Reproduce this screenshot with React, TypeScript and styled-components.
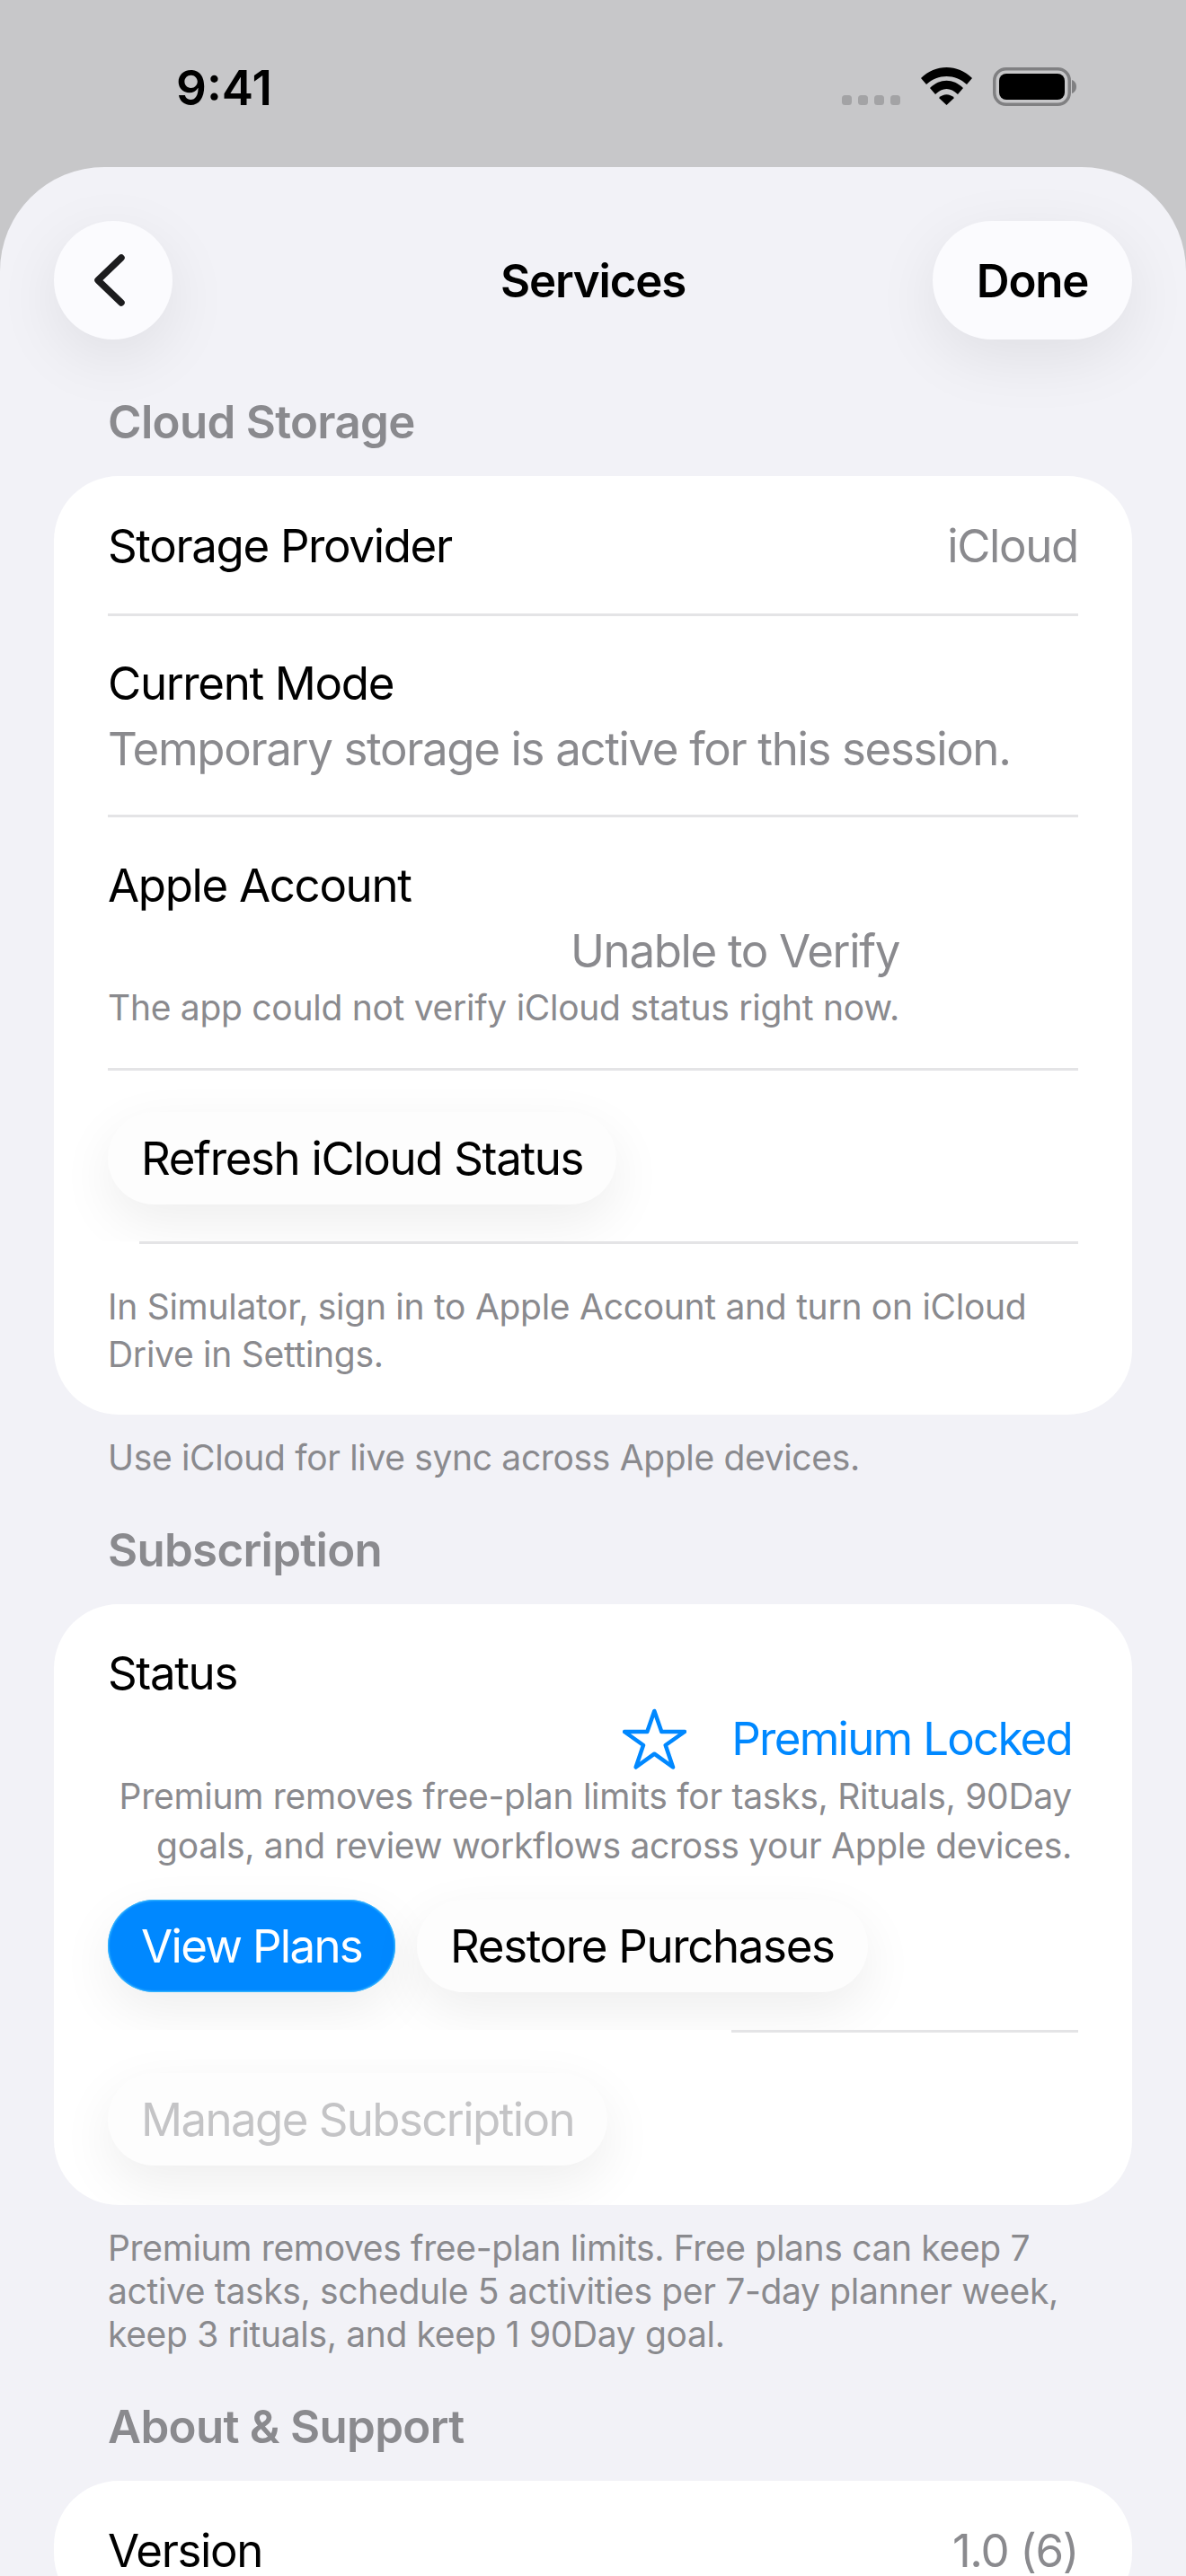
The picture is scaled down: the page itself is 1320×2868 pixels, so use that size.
import styled, { createGlobalStyle } from "styled-components";

const GlobalStyle = createGlobalStyle`
  html, body {
    margin: 0;
    padding: 0;
    background: #c7c7c9;
  }
  body {
    font-family: Inter, "Liberation Sans", sans-serif;
    -webkit-font-smoothing: antialiased;
  }
`;

const Screen = styled.div`
  width: 1320px;
  height: 2868px;
  overflow: hidden;
  background: #c7c7c9;
`;

const StatusBar = styled.div`
  height: 186px;
  box-sizing: border-box;
  padding: 68px 122px 0 196px;
  display: flex;
  justify-content: space-between;
  align-items: flex-start;
`;

const Clock = styled.div`
  font-size: 53px;
  line-height: 60px;
  font-weight: 600;
  color: #000;
`;

const StatusIcons = styled.div`
  display: flex;
  align-items: flex-start;
  gap: 23px;
  margin-top: 7px;
`;

const Dots = styled.svg`
  margin-top: 31px;
`;

const Sheet = styled.div`
  background: #f2f2f7;
  border-radius: 116px 116px 0 0;
  padding: 60px 60px 0;
  height: 2682px;
  box-sizing: border-box;
`;

const NavBar = styled.div`
  display: grid;
  grid-template-columns: 1fr auto 1fr;
  align-items: center;
  height: 132px;
`;

const GlassButton = styled.div`
  height: 132px;
  width: 132px;
  box-sizing: border-box;
  border-radius: 66px;
  background: #fbfbfe;
  box-shadow: 0 20px 70px rgba(0, 0, 0, 0.08);
  display: flex;
  align-items: center;
  justify-content: center;
`;

const DoneButton = styled(GlassButton)`
  width: 222px;
  justify-self: end;
  font-size: 51px;
  font-weight: 600;
  letter-spacing: -1.2px;
  color: #000;
`;

const BackIcon = styled.svg`
  margin-right: 8px;
`;

const Title = styled.div`
  font-size: 51px;
  font-weight: 600;
  letter-spacing: -1.2px;
  color: #000;
`;

const SectionTitle = styled.div<{ $top: number }>`
  margin-top: ${(p) => p.$top}px;
  padding-left: 60px;
  font-size: 51px;
  line-height: 62px;
  font-weight: 600;
  letter-spacing: -0.7px;
  color: #8a8a8e;
`;

const Card = styled.div`
  margin-top: 29px;
  background: #fff;
  border-radius: 72px;
  overflow: hidden;
`;

const Row = styled.div<{ $pad?: string }>`
  margin: 0 60px;
  padding: ${(p) => p.$pad ?? "0"};
`;

const Divider = styled.div<{ $left?: number }>`
  height: 3px;
  margin-left: ${(p) => p.$left ?? 60}px;
  margin-right: 60px;
  background: #e4e4e6;
`;

const SplitRow = styled(Row)`
  display: flex;
  justify-content: space-between;
  align-items: center;
  box-sizing: border-box;
  height: 153px;
  padding-top: 2px;
`;

const Label = styled.div`
  font-size: 51px;
  line-height: 73px;
  letter-spacing: -1.35px;
  color: #000;
`;

const Value = styled(Label)`
  color: #8a8a8e;
`;

const AccountValue = styled(Value)`
  padding-left: 515px;
`;

const Small = styled.div`
  font-size: 39px;
  line-height: 53px;
  letter-spacing: -0.28px;
  color: #8a8a8e;
`;

const StatusLine = styled.div`
  display: flex;
  justify-content: flex-end;
  align-items: center;
  gap: 50px;
  height: 73px;
  margin-right: 7px;
  font-size: 51px;
  letter-spacing: -1.75px;
  color: #0088ff;
`;

const RightSmall = styled(Small)`
  text-align: right;
  margin-right: 7px;
  line-height: 55px;
`;

const ButtonRow = styled.div`
  display: flex;
  gap: 24px;
`;

const Pill = styled.div<{ $variant?: "primary" | "disabled" }>`
  height: 103px;
  padding: 0 37px;
  border-radius: 52px;
  display: flex;
  align-items: center;
  font-size: 51px;
  letter-spacing: ${(p) =>
    p.$variant === "primary" ? "-1.7px" : p.$variant === "disabled" ? "-1.6px" : "-1.35px"};
  background: ${(p) => (p.$variant === "primary" ? "#0088ff" : "#fdfdfd")};
  color: ${(p) =>
    p.$variant === "primary" ? "#fff" : p.$variant === "disabled" ? "#c4c4c6" : "#000"};
  box-shadow: ${(p) =>
    p.$variant === "primary"
      ? "inset 0 0 2px 1px #45c4ff, 0 20px 60px rgba(0, 0, 0, 0.07)"
      : "0 20px 60px rgba(0, 0, 0, 0.07)"};
`;

const Note = styled(Small)`
  margin-top: 24px;
  padding: 0 60px;
  line-height: 48px;
  letter-spacing: -0.34px;
`;

// the list row clips the button shadow along its bottom edge
const ClippedRow = styled.div<{ $height: number }>`
  height: ${(p) => p.$height}px;
  clip-path: inset(-80px 0 0 0);
`;

const BackGlyph = () => (
  <BackIcon width="34" height="58" viewBox="0 0 34 58" fill="none">
    <path d="M30 4 L4 29 L30 54" stroke="#1c1c1e" strokeWidth="7.5" strokeLinecap="round" strokeLinejoin="round" />
  </BackIcon>
);

const StatusIconSet = () => (
  <StatusIcons>
    <Dots width="65" height="11" viewBox="0 0 65 11">
      {[0, 18, 36, 54].map((x) => (
        <rect key={x} x={x} width="11" height="11" rx="3.5" fill="#a3a3a5" />
      ))}
    </Dots>
    <svg width="57" height="43" viewBox="0 0 57 43">
      <path d="M0 12 C16 -4 41 -4 57 12 L51 19 C38 7 19 7 6 19 Z" fill="#000" />
      <path d="M10 23 C21 12 36 12 47 23 L41 30 C33 22 24 22 16 30 Z" fill="#000" />
      <path d="M20 34 C25 29 32 29 37 34 L28.5 42 Z" fill="#000" />
    </svg>
    <svg width="93" height="43" viewBox="0 0 93 43">
      <rect x="1.75" y="1.75" width="83.5" height="39.5" rx="13" fill="none" stroke="#808082" strokeWidth="3.5" />
      <rect x="7" y="7" width="73" height="29" rx="8" fill="#000" />
      <path d="M88 14 C91 15 93 18 93 21.5 C93 25 91 28 88 29 Z" fill="#808082" />
    </svg>
  </StatusIcons>
);

const StarGlyph = () => (
  <svg width="71" height="68" viewBox="0 0 71 68" fill="none">
    <path
      d="M35.3 3 L43.3 26 L69 26 L47.7 41 L56 65.5 L35.3 50.7 L14.7 65.5 L23 41 L2 26 L27.3 26 Z"
      stroke="#0088ff"
      strokeWidth="4.5"
      strokeLinejoin="round"
    />
  </svg>
);

const App = () => {
  return (
    <>
      <GlobalStyle />
      <Screen>
        <StatusBar>
          <Clock>9:41</Clock>
          <StatusIconSet />
        </StatusBar>
        <Sheet>
          <NavBar>
            <GlassButton>
              <BackGlyph />
            </GlassButton>
            <Title>Services</Title>
            <DoneButton>Done</DoneButton>
          </NavBar>

          <SectionTitle $top={61}>Cloud Storage</SectionTitle>
          <Card>
            <SplitRow>
              <Label>Storage Provider</Label>
              <Value>iCloud</Value>
            </SplitRow>
            <Divider />
            <Row $pad="38px 0 37px">
              <Label>Current Mode</Label>
              <Value>Temporary storage is active for this session.</Value>
            </Row>
            <Divider />
            <Row $pad="39px 0 41px">
              <Label>Apple Account</Label>
              <AccountValue>Unable to Verify</AccountValue>
              <Small>The app could not verify iCloud status right now.</Small>
            </Row>
            <Divider />
            <ClippedRow $height={190}>
              <Row $pad="46px 0 0">
                <ButtonRow>
                  <Pill>Refresh iCloud Status</Pill>
                </ButtonRow>
              </Row>
            </ClippedRow>
            <Divider $left={95} />
            <Row $pad="43px 0 41px">
              <Small>In Simulator, sign in to Apple Account and turn on iCloud Drive in Settings.</Small>
            </Row>
          </Card>
          <Note>Use iCloud for live sync across Apple devices.</Note>

          <SectionTitle $top={48}>Subscription</SectionTitle>
          <Card>
            <Row $pad="40px 0 0">
              <Label>Status</Label>
              <StatusLine>
                <StarGlyph />
                <span>Premium Locked</span>
              </StatusLine>
              <RightSmall>Premium removes free-plan limits for tasks, Rituals, 90Day goals, and review workflows across your Apple devices.</RightSmall>
            </Row>
            <ClippedRow $height={178}>
              <Row $pad="33px 0 0">
                <ButtonRow>
                  <Pill $variant="primary">View Plans</Pill>
                  <Pill>Restore Purchases</Pill>
                </ButtonRow>
              </Row>
            </ClippedRow>
            <Divider $left={754} />
            <Row $pad="45px 0 44px">
              <ButtonRow>
                <Pill $variant="disabled">Manage Subscription</Pill>
              </ButtonRow>
            </Row>
          </Card>
          <Note>Premium removes free-plan limits. Free plans can keep 7 active tasks, schedule 5 activities per 7-day planner week, keep 3 rituals, and keep 1 90Day goal.</Note>

          <SectionTitle $top={48}>About &amp; Support</SectionTitle>
          <Card>
            <SplitRow>
              <Label>Version</Label>
              <Value>1.0 (6)</Value>
            </SplitRow>
          </Card>
        </Sheet>
      </Screen>
    </>
  );
};

export default App;
